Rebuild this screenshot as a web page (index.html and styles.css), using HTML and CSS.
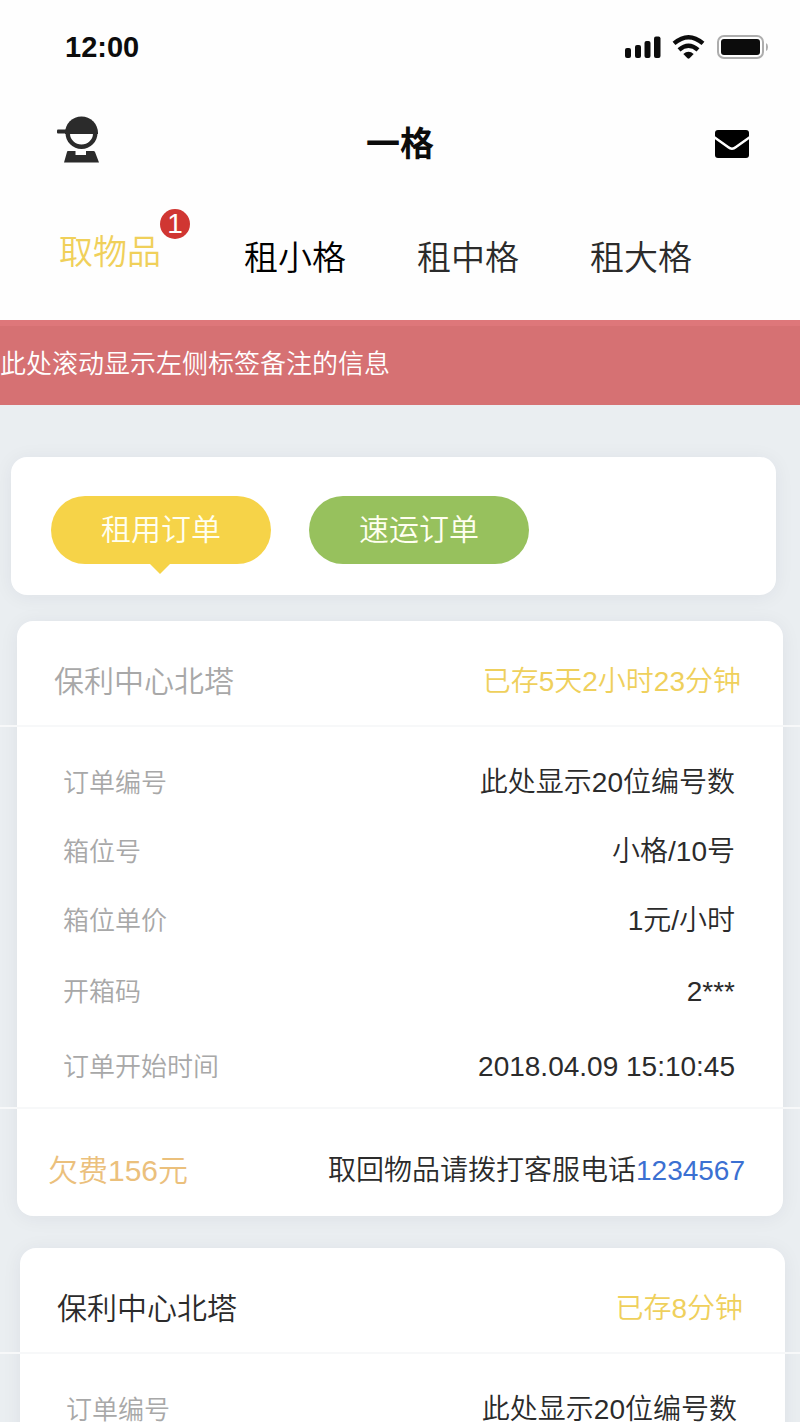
FILE: index.html
```html
<!DOCTYPE html>
<html lang="zh-CN">
<head>
<meta charset="utf-8">
<meta name="viewport" content="width=device-width, initial-scale=1">
<title>一格</title>
<link rel="stylesheet" href="styles.css">
</head>
<body>
<div class="screen">
  <header class="header">
    <div class="status">
      <time class="status-time">12:00</time>
      <svg class="status-icons" viewBox="0 0 144 26" role="img" aria-label="信号、无线网络、电量">
        <g fill="#0c0c0c">
          <rect x="1" y="14" width="6" height="10" rx="2"/>
          <rect x="11" y="11" width="6" height="13" rx="2"/>
          <rect x="20.500" y="7" width="6" height="17" rx="2"/>
          <rect x="30" y="2.500" width="6.500" height="21.500" rx="2"/>
          <path d="M59.300 20 Q64.500 15.500 69.700 20 L65.500 24.300 Q64.500 25 63.500 24.300Z"/>
        </g>
        <g fill="none" stroke="#0c0c0c" stroke-width="4.400">
          <path d="M50 9.400 Q64.500 -3 79 9.400"/>
          <path d="M55 15.800 Q64.500 7.600 74 15.800"/>
        </g>
        <rect x="94" y="2" width="45" height="22" rx="6" fill="none" stroke="#adadad" stroke-width="2"/>
        <rect x="97" y="5" width="39" height="16" rx="3" fill="#0c0c0c"/>
        <path d="M142 9 Q144 10 144 13 T142 17Z" fill="#adadad"/>
      </svg>
    </div>
    <div class="appbar">
      <button class="icon-button" aria-label="个人中心">
        <svg class="icon-user" viewBox="0 0 44 48">
          <g fill="#2b2b2b">
            <path d="M8 17 A16.500 16.500 0 0 1 41 17 V18 H8Z"/>
            <path d="M1 13.500 H10 V17.500 H1 Q0 17.500 0 16.500 V14.500 Q0 13.500 1 13.500Z"/>
            <path fill-rule="evenodd" d="M8.500 17 H40.500 A16 16 0 0 1 8.500 17Z M13 17.500 A11.500 11 0 0 0 36 17.500Z"/>
            <path d="M10.500 35 H18.500 V39 H29 V35 H36.500 Q37.500 35 38 36 L42 46.500 H7 L10 36Z"/>
          </g>
        </svg>
      </button>
      <h1 class="title">一格</h1>
      <button class="icon-button" aria-label="消息">
        <svg class="icon-mail" viewBox="0 0 34 28">
          <rect width="34" height="28" rx="3"/>
          <path d="M-1 7 L13 17 Q17 20.500 21 17 L35 7" fill="none" stroke="#fff" stroke-width="2.400"/>
        </svg>
      </button>
    </div>
    <nav class="tabs">
      <a class="tab tab-current" href="#pickup" aria-current="page">取物品<span class="badge">1</span></a>
      <a class="tab tab-strong" href="#small">租小格</a>
      <a class="tab" href="#medium">租中格</a>
      <a class="tab" href="#large">租大格</a>
    </nav>
  </header>

  <p class="notice">此处滚动显示左侧标签备注的信息</p>

  <main class="content">
    <section class="card switcher">
      <button class="pill pill-current">租用订单</button>
      <button class="pill pill-green">速运订单</button>
    </section>

    <article class="card order">
      <header class="order-head">
        <h2 class="order-place muted">保利中心北塔</h2>
        <span class="order-duration">已存5天2小时23分钟</span>
      </header>
      <hr class="rule">
      <dl class="details">
        <dt>订单编号</dt><dd>此处显示20位编号数</dd>
        <dt>箱位号</dt><dd>小格/10号</dd>
        <dt>箱位单价</dt><dd>1元/小时</dd>
        <dt>开箱码</dt><dd>2***</dd>
        <dt>订单开始时间</dt><dd>2018.04.09 15:10:45</dd>
      </dl>
      <hr class="rule">
      <footer class="order-foot">
        <strong class="debt">欠费156元</strong>
        <span>取回物品请拨打客服电话<a class="phone" href="tel:1234567">1234567</a></span>
      </footer>
    </article>

    <article class="card order order-next">
      <header class="order-head">
        <h2 class="order-place">保利中心北塔</h2>
        <span class="order-duration">已存8分钟</span>
      </header>
      <hr class="rule">
      <dl class="details">
        <dt>订单编号</dt><dd>此处显示20位编号数</dd>
      </dl>
    </article>
  </main>
</div>
</body>
</html>
```
FILE: styles.css
```css
* {
  box-sizing: border-box;
}

body {
  margin: 0;
  background: #eaeef1;
  color: #2b2b2b;
  font-family: "Liberation Sans", "Noto Sans CJK SC", sans-serif;
  font-size: 28px;
  font-weight: 350;
  line-height: 40px;
}

button {
  padding: 0;
  border: 0;
  background: none;
  font: inherit;
}

svg {
  display: block;
}

.screen {
  height: 100vh;
  overflow: hidden;
}

.header {
  background: #fefefe;
}

.status {
  display: flex;
  align-items: center;
  justify-content: space-between;
  height: 94px;
  padding: 0 32px 0 65px;
}

.status-time {
  color: #0c0c0c;
  font-size: 29px;
  font-weight: 700;
}

.status-icons {
  width: 144px;
  height: 26px;
}

.appbar {
  display: grid;
  grid-template-columns: 1fr auto 1fr;
  align-items: center;
  height: 100px;
  padding: 0 51px;
}

.icon-button {
  justify-self: start;
}

.icon-button:last-child {
  justify-self: end;
}

.icon-user {
  width: 44px;
  height: 48px;
  margin: 0 0 8px 6px;
}

.icon-mail {
  width: 34px;
  height: 28px;
}

.title {
  margin: 0;
  color: #0c0c0c;
  font-size: 34px;
  font-weight: 700;
}

.tabs {
  display: flex;
  justify-content: space-between;
  height: 126px;
  padding: 44px 108px 0 59px;
}

.tab {
  color: #2b2b2b;
  font-size: 34px;
  text-decoration: none;
}

.tab-strong {
  color: #000;
}

.tab-current {
  position: relative;
  align-self: flex-start;
  margin-top: -6px;
  padding-right: 12px;
  color: #f0d05a;
}

.badge {
  position: absolute;
  top: -23px;
  right: -17px;
  width: 30px;
  height: 30px;
  border-radius: 50%;
  background: #d03632;
  color: #fff;
  font-size: 28px;
  line-height: 30px;
  text-align: center;
}

.notice {
  height: 85px;
  margin: 0;
  padding-top: 18px;
  border-top: 6px solid #de777a;
  background: #d67173;
  color: #fff;
  font-size: 26px;
}

.content {
  padding-top: 52px;
}

.card {
  border-radius: 16px;
  background: #fff;
  box-shadow: 0 2px 20px rgba(40, 30, 60, 0.06);
}

.switcher {
  display: flex;
  gap: 38px;
  margin: 0 24px 26px 11px;
  padding: 39px 40px 31px;
}

.pill {
  position: relative;
  width: 220px;
  height: 68px;
  border-radius: 34px;
  color: #fffff0;
  font-size: 30px;
}

.pill-current {
  background: #f6d348;
}

.pill-current::after {
  content: "";
  position: absolute;
  top: 100%;
  left: 50%;
  margin: -1px 0 0 -12px;
  border: 11px solid transparent;
  border-top-color: #f6d348;
  border-bottom: 0;
}

.pill-green {
  background: #97c15d;
}

.order {
  margin: 0 17px 32px;
}

.order-next {
  margin: 0 15px 0 20px;
}

.order-head {
  display: flex;
  align-items: center;
  justify-content: space-between;
  height: 104px;
  padding: 18px 42px 0 37px;
}

.order-place {
  margin: 0;
  font-size: 30px;
  font-weight: inherit;
}

.muted {
  color: #a8a8a8;
}

.order-duration {
  color: #efd05c;
}

.rule {
  height: 2px;
  margin: 0 -20px;
  border: 0;
  background: #f7f8f9;
}

.details {
  display: grid;
  grid-template-columns: auto 1fr;
  grid-template-rows: 69px 69px 71px 75px;
  grid-auto-rows: 60px;
  margin: 0;
  padding: 36px 48px 0 46px;
}

.details dt {
  color: #a8a8a8;
  font-size: 26px;
}

.details dd {
  margin: 0;
  text-align: right;
}

.order-foot {
  display: flex;
  align-items: center;
  justify-content: space-between;
  height: 107px;
  padding: 16px 38px 0 31px;
}

.debt {
  color: #ebc07c;
  font-size: 30px;
  font-weight: inherit;
}

.phone {
  color: #3b70d2;
  text-decoration: none;
}
```
